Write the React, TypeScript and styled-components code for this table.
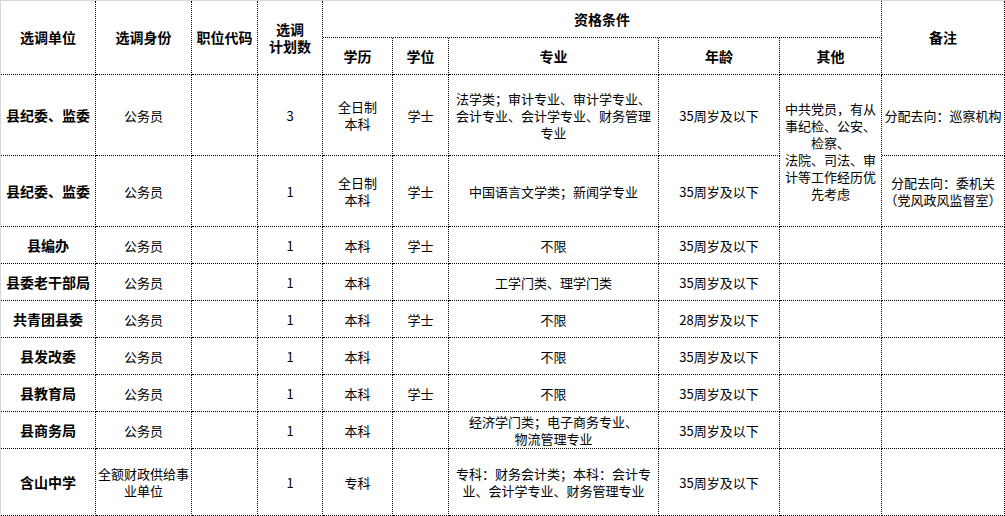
import React from 'react';
import styled, { createGlobalStyle } from 'styled-components';

const COLS = [95, 96, 66, 65, 70, 56, 210, 121, 102, 123];
const ROWS = [37, 37, 81, 71, 37, 37, 37, 37, 37, 37, 67];

interface CellData {
  text: React.ReactNode;
  rows?: number;
  wrap?: boolean;
}

interface RowData {
  unit: string;
  cells: CellData[];
}

const other: CellData = {
  text: (
    <>
      中共党员，有从事纪检、公安、检察、
      <br />
      法院、司法、审计等工作经历优先考虑
    </>
  ),
  rows: 2,
};

const rows: RowData[] = [
  {
    unit: '县纪委、监委',
    cells: [
      { text: '公务员' },
      { text: '' },
      { text: '3' },
      { text: <>全日制<br />本科</> },
      { text: '学士' },
      { text: '法学类；审计专业、审计学专业、会计专业、会计学专业、财务管理专业' },
      { text: '35周岁及以下' },
      other,
      { text: '分配去向：巡察机构', wrap: false },
    ],
  },
  {
    unit: '县纪委、监委',
    cells: [
      { text: '公务员' },
      { text: '' },
      { text: '1' },
      { text: <>全日制<br />本科</> },
      { text: '学士' },
      { text: '中国语言文学类；新闻学专业' },
      { text: '35周岁及以下' },
      { text: <>分配去向：委机关<br />（党风政风监督室）</>, wrap: false },
    ],
  },
  { unit: '县编办', cells: plain('本科', '学士', '不限', '35周岁及以下') },
  { unit: '县委老干部局', cells: plain('本科', '', '工学门类、理学门类', '35周岁及以下') },
  { unit: '共青团县委', cells: plain('本科', '学士', '不限', '28周岁及以下') },
  { unit: '县发改委', cells: plain('本科', '', '不限', '35周岁及以下') },
  { unit: '县教育局', cells: plain('本科', '学士', '不限', '35周岁及以下') },
  {
    unit: '县商务局',
    cells: plain('本科', '', <>经济学门类；电子商务专业、<br />物流管理专业</>, '35周岁及以下'),
  },
  {
    unit: '含山中学',
    cells: [
      { text: '全额财政供给事业单位' },
      { text: '' },
      { text: '1' },
      { text: '专科' },
      { text: '' },
      { text: '专科：财务会计类；本科：会计专业、会计学专业、财务管理专业' },
      { text: '35周岁及以下' },
      { text: '' },
      { text: '' },
    ],
  },
];

function plain(edu: string, degree: string, major: React.ReactNode, age: string): CellData[] {
  return [
    { text: '公务员' },
    { text: '' },
    { text: '1' },
    { text: edu },
    { text: degree },
    { text: major },
    { text: age },
    { text: '' },
    { text: '' },
  ];
}

const App: React.FC = () => {
  return (
    <>
      <GlobalStyle />
      <Sheet>
        <Cell $head $rows={2}><span>选调单位</span></Cell>
        <Cell $head $rows={2}><span>选调身份</span></Cell>
        <Cell $head $rows={2}><span>职位代码</span></Cell>
        <Cell $head $rows={2}><span>选调<br />计划数</span></Cell>
        <Cell $head $cols={5}><span>资格条件</span></Cell>
        <Cell $head $rows={2}><span>备注</span></Cell>
        <Cell $head><span>学历</span></Cell>
        <Cell $head><span>学位</span></Cell>
        <Cell $head><span>专业</span></Cell>
        <Cell $head><span>年龄</span></Cell>
        <Cell $head><span>其他</span></Cell>

        {rows.map((row, i) => (
          <React.Fragment key={i}>
            <Cell $head><span>{row.unit}</span></Cell>
            {row.cells.map((c, j) => (
              <Cell key={j} $rows={c.rows} $nowrap={c.wrap === false}>
                <span>{c.text}</span>
              </Cell>
            ))}
          </React.Fragment>
        ))}
      </Sheet>
    </>
  );
};

export default App;

const GlobalStyle = createGlobalStyle`
  html, body {
    margin: 0;
    padding: 0;
    background: #fff;
  }
  body {
    font-family: "Noto Sans CJK SC", "Noto Sans", sans-serif;
    color: #000;
  }
`;

const Sheet = styled.div`
  display: grid;
  grid-template-columns: ${COLS.map((w) => `${w}px`).join(' ')};
  grid-template-rows: ${ROWS.map((h) => `${h}px`).join(' ')};
  width: 1005px;
  box-sizing: border-box;
  border-top: 1px solid #d6d6d6;
  border-left: 1px solid #d6d6d6;
`;

const Cell = styled.div<{ $head?: boolean; $rows?: number; $cols?: number; $nowrap?: boolean }>`
  box-sizing: border-box;
  display: flex;
  align-items: center;
  justify-content: center;
  text-align: center;
  padding: 0 ${(p) => (p.$nowrap ? 1 : 2)}px;
  border-right: 1px dotted #000;
  border-bottom: 1px dotted #000;
  grid-row: ${(p) => (p.$rows ? `span ${p.$rows}` : 'auto')};
  grid-column: ${(p) => (p.$cols ? `span ${p.$cols}` : 'auto')};
  font-size: ${(p) => (p.$head ? 14 : 13)}px;
  font-weight: ${(p) => (p.$head ? 700 : 400)};
  line-height: 17px;
  white-space: ${(p) => (p.$nowrap ? 'nowrap' : 'normal')};
  overflow: hidden;
`;
